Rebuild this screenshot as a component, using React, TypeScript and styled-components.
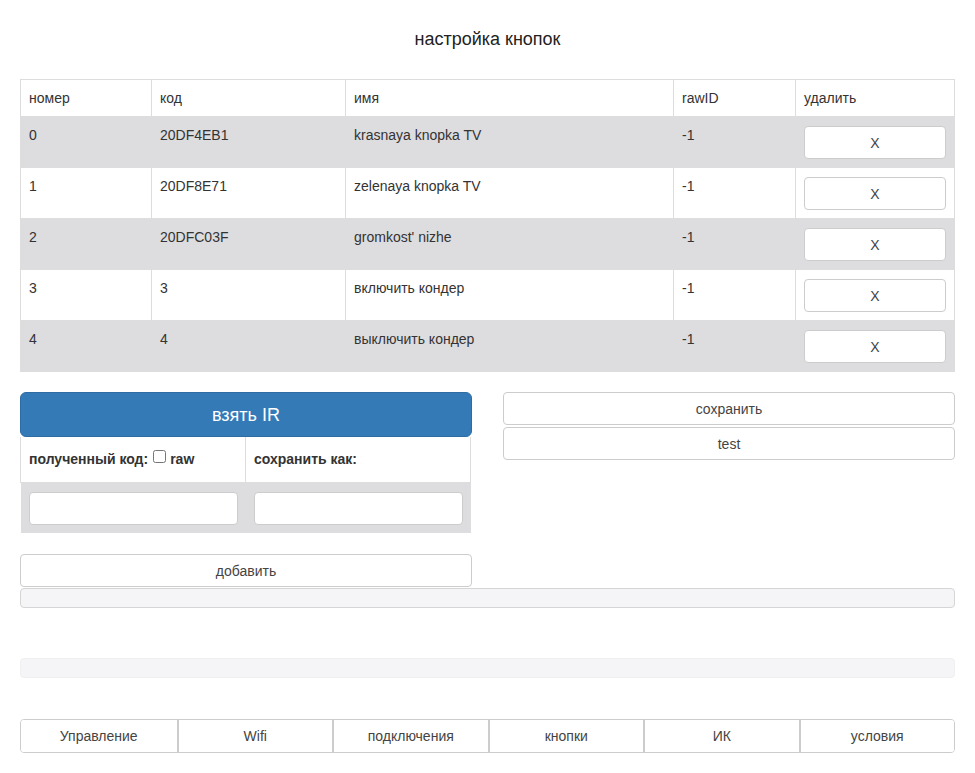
import React from "react";
import styled, { createGlobalStyle } from "styled-components";

const GlobalStyle = createGlobalStyle`
  html, body { margin: 0; padding: 0; background: #fff; }
  body {
    font-family: "Liberation Sans", Arial, sans-serif;
    font-size: 14px;
    line-height: 20px;
    color: #333;
  }
  * { box-sizing: border-box; }
`;

const Page = styled.div`
  padding: 0 20px;
  width: 975px;
`;

const Title = styled.div`
  text-align: center;
  font-size: 18px;
  line-height: 20px;
  padding-top: 29px;
  height: 79px;
  color: #222;
`;

const Table = styled.table`
  width: 100%;
  border-collapse: collapse;
  border-spacing: 0;
  table-layout: fixed;
`;

const Th = styled.th<{ $w?: number }>`
  width: ${(p) => (p.$w ? `${p.$w}px` : "auto")};
  text-align: left;
  font-weight: normal;
  padding: 8px 8px;
  border: 1px solid #ddd;
  vertical-align: top;
  height: 37px;
`;

const Tr = styled.tr<{ $gray?: boolean }>`
  background: ${(p) => (p.$gray ? "#dddcdf" : "#fff")};
`;

const Td = styled.td`
  padding: 8px 8px;
  border: 1px solid #ddd;
  vertical-align: top;
  height: 50px;
`;

const Button = styled.button`
  display: block;
  width: 100%;
  height: 34px;
  padding: 6px 12px;
  font-family: "Liberation Sans", Arial, sans-serif;
  font-size: 14px;
  line-height: 20px;
  color: #444;
  background: #fff;
  border: 1px solid #ccc;
  border-radius: 4px;
  text-align: center;
`;

const DelButton = styled(Button)`
  margin-top: 1px;
  height: 33px;
`;

const Lower = styled.div`
  display: grid;
  grid-template-columns: 452px 452px;
  column-gap: 31px;
  margin-top: 20px;
`;

const LeftCol = styled.div`
  display: flex;
  flex-direction: column;
`;

const RightCol = styled.div`
  display: flex;
  flex-direction: column;
  gap: 2px;
`;

const PrimaryButton = styled.button`
  height: 45px;
  width: 100%;
  background: #337ab7;
  border: 1px solid #2e6da4;
  border-radius: 6px;
  color: #fff;
  font-family: "Liberation Sans", Arial, sans-serif;
  font-size: 18px;
  line-height: 24px;
`;

const IrTable = styled.table`
  width: 451px;
  border-collapse: collapse;
  table-layout: fixed;
`;

const IrTh = styled.th`
  text-align: left;
  font-weight: bold;
  padding: 8px 8px;
  border: 1px solid #ddd;
  border-top: none;
  height: 45px;
  vertical-align: middle;
`;

const IrTd = styled.td`
  padding: 9px 8px 8px;
  height: 51px;
  vertical-align: top;
`;

const IrRow = styled.tr`
  background: #dddcdf;
`;

const Input = styled.input`
  display: block;
  width: 100%;
  height: 33px;
  border: 1px solid #ccc;
  border-radius: 4px;
  background: #fff;
  padding: 6px 12px;
`;

const Check = styled.input`
  width: 13px;
  height: 13px;
  margin: 0 4px 0 5px;
  vertical-align: 1px;
  accent-color: #ddd;
`;

const AddButton = styled(Button)`
  margin-top: 21px;
  height: 33px;
`;

const SideButton = styled(Button)`
  height: 33px;
`;

const Progress = styled.div<{ $bordered?: boolean }>`
  height: 20px;
  background: #f5f5f7;
  border-radius: 4px;
  border: 1px solid ${(p) => (p.$bordered ? "#d5d5d5" : "#f0f0f2")};
`;

const ProgressTop = styled(Progress)`
  margin-top: 1px;
`;

const ProgressBottom = styled(Progress)`
  margin-top: 50px;
`;

const NavGroup = styled.div`
  display: grid;
  grid-template-columns: repeat(6, 1fr);
  margin-top: 41px;
  border: 1px solid #ccc;
  border-radius: 4px;
  overflow: hidden;
  height: 34px;
`;

const NavButton = styled.button`
  background: #fff;
  border: none;
  border-left: 2px solid #ccc;
  font-family: "Liberation Sans", Arial, sans-serif;
  font-size: 14px;
  color: #444;
  padding: 0;
  &:first-child { border-left: none; }
`;

const rows = [
  ["0", "20DF4EB1", "krasnaya knopka TV", "-1"],
  ["1", "20DF8E71", "zelenaya knopka TV", "-1"],
  ["2", "20DFC03F", "gromkost' nizhe", "-1"],
  ["3", "3", "включить кондер", "-1"],
  ["4", "4", "выключить кондер", "-1"],
];

const nav = ["Управление", "Wifi", "подключения", "кнопки", "ИК", "условия"];

export default function App() {
  return (
    <Page>
      <GlobalStyle />
      <Title>настройка кнопок</Title>
      <Table>
        <thead>
          <tr>
            <Th $w={131}>номер</Th>
            <Th $w={194}>код</Th>
            <Th $w={328}>имя</Th>
            <Th $w={122}>rawID</Th>
            <Th>удалить</Th>
          </tr>
        </thead>
        <tbody>
          {rows.map((r, i) => (
            <Tr key={i} $gray={i % 2 === 0}>
              <Td>{r[0]}</Td>
              <Td>{r[1]}</Td>
              <Td>{r[2]}</Td>
              <Td>{r[3]}</Td>
              <Td>
                <DelButton>X</DelButton>
              </Td>
            </Tr>
          ))}
        </tbody>
      </Table>
      <Lower>
        <LeftCol>
          <PrimaryButton>взять IR</PrimaryButton>
          <IrTable>
            <thead>
              <tr>
                <IrTh>
                  полученный код:
                  <Check type="checkbox" />
                  raw
                </IrTh>
                <IrTh>сохранить как:</IrTh>
              </tr>
            </thead>
            <tbody>
              <IrRow>
                <IrTd>
                  <Input />
                </IrTd>
                <IrTd>
                  <Input />
                </IrTd>
              </IrRow>
            </tbody>
          </IrTable>
          <AddButton>добавить</AddButton>
        </LeftCol>
        <RightCol>
          <SideButton>сохранить</SideButton>
          <SideButton>test</SideButton>
        </RightCol>
      </Lower>
      <ProgressTop $bordered />
      <ProgressBottom />
      <NavGroup>
        {nav.map((n) => (
          <NavButton key={n}>{n}</NavButton>
        ))}
      </NavGroup>
    </Page>
  );
}
